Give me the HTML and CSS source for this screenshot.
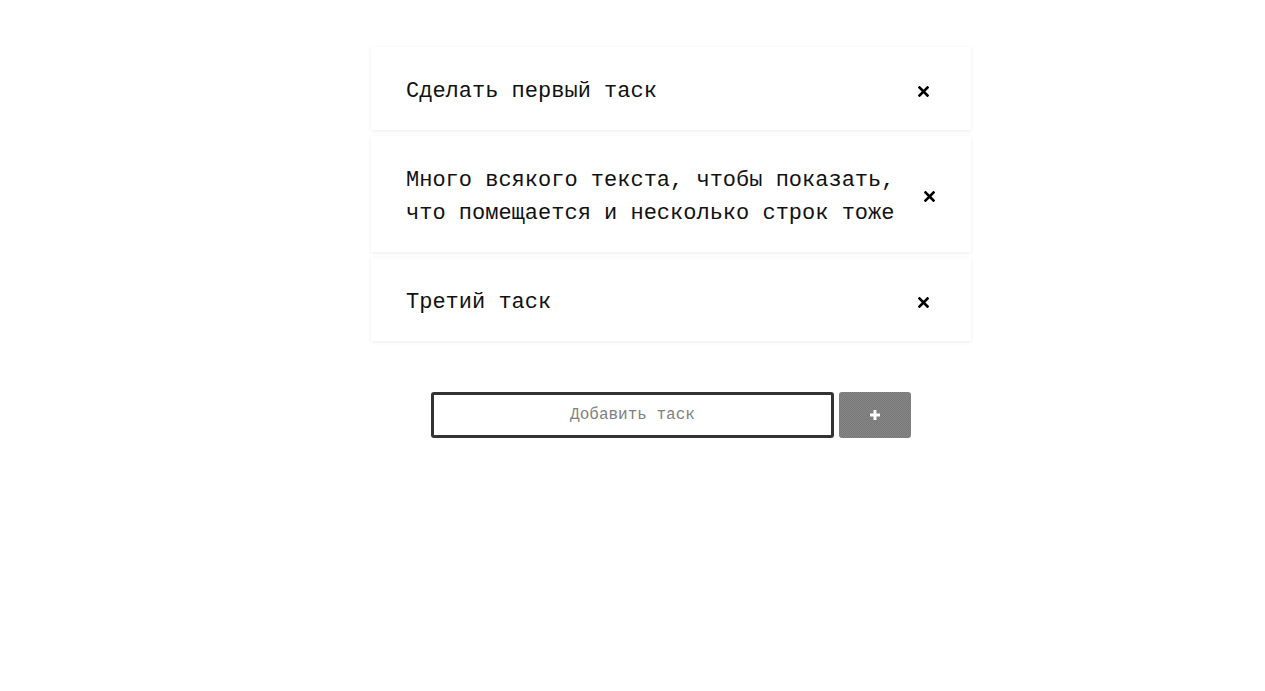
FILE: index.html
```html
<!DOCTYPE html>
<html lang="ru">
<head>
<meta charset="utf-8">
<title>Таски</title>
<link rel="stylesheet" href="styles.css">
</head>
<body>
<div class="page">
  <ul class="list">
    <li class="card">
      <span class="text">Сделать первый таск</span>
      <button class="close" aria-label="Удалить"><svg width="11" height="11" viewBox="0 0 11 11"><path d="M1.5 1.5 L9.5 9.5 M9.5 1.5 L1.5 9.5" stroke="#000" stroke-width="2.6" stroke-linecap="square"/></svg></button>
    </li>
    <li class="card">
      <span class="text">Много всякого текста, чтобы показать, что помещается и несколько строк тоже</span>
      <button class="close" aria-label="Удалить"><svg width="11" height="11" viewBox="0 0 11 11"><path d="M1.5 1.5 L9.5 9.5 M9.5 1.5 L1.5 9.5" stroke="#000" stroke-width="2.6" stroke-linecap="square"/></svg></button>
    </li>
    <li class="card">
      <span class="text">Третий таск</span>
      <button class="close" aria-label="Удалить"><svg width="11" height="11" viewBox="0 0 11 11"><path d="M1.5 1.5 L9.5 9.5 M9.5 1.5 L1.5 9.5" stroke="#000" stroke-width="2.6" stroke-linecap="square"/></svg></button>
    </li>
  </ul>
  <form class="add">
    <input class="field" type="text" placeholder="Добавить таск">
    <button class="plus" type="button" aria-label="Добавить"><svg width="12" height="12" viewBox="0 0 12 12"><path d="M6 1 V11 M1 6 H11" stroke="#fff" stroke-width="3"/></svg></button>
  </form>
</div>
</body>
</html>
```
FILE: styles.css
```css
html, body {
  margin: 0;
  padding: 0;
  background: #fff;
}
body {
  font-family: "Liberation Mono", "DejaVu Sans Mono", monospace;
  color: #111;
}
.page {
  padding: 47px 0 0 77px;
}
.list {
  list-style: none;
  margin: 0 auto;
  padding: 0;
  width: 600px;
  display: flex;
  flex-direction: column;
  gap: 6px;
}
.card {
  display: flex;
  align-items: center;
  justify-content: space-between;
  background: #fff;
  padding: 24px 34px 22px 35px;
  box-shadow: 0 1px 4px rgba(0, 0, 0, 0.08);
  font-size: 22px;
  line-height: 33px;
}
.text {
  flex: 0 1 auto;
  padding-top: 4px;
}
.close {
  flex: 0 1 28px;
  width: 28px;
  border: 0;
  background: none;
  padding: 0;
  display: flex;
  justify-content: center;
  align-items: center;
  cursor: pointer;
}
.close svg {
  display: block;
  margin-top: 3px;
}
.add {
  display: flex;
  justify-content: center;
  gap: 5px;
  margin: 51px auto 0;
  width: 480px;
}
.field {
  box-sizing: border-box;
  width: 403px;
  height: 46px;
  border: 3px solid #333;
  border-radius: 3px;
  padding: 0 10px;
  font-family: "Liberation Mono", "DejaVu Sans Mono", monospace;
  font-size: 16px;
  text-align: center;
  color: #333;
  outline: none;
}
.field::placeholder {
  color: #808080;
}
.plus {
  width: 72px;
  height: 46px;
  border: 0;
  border-radius: 3px;
  background: repeating-conic-gradient(#777 0 25%, #878787 0 50%) 0 0 / 2px 2px;
  display: flex;
  justify-content: center;
  align-items: center;
  padding: 0;
  cursor: pointer;
}
.plus svg {
  display: block;
}
```
